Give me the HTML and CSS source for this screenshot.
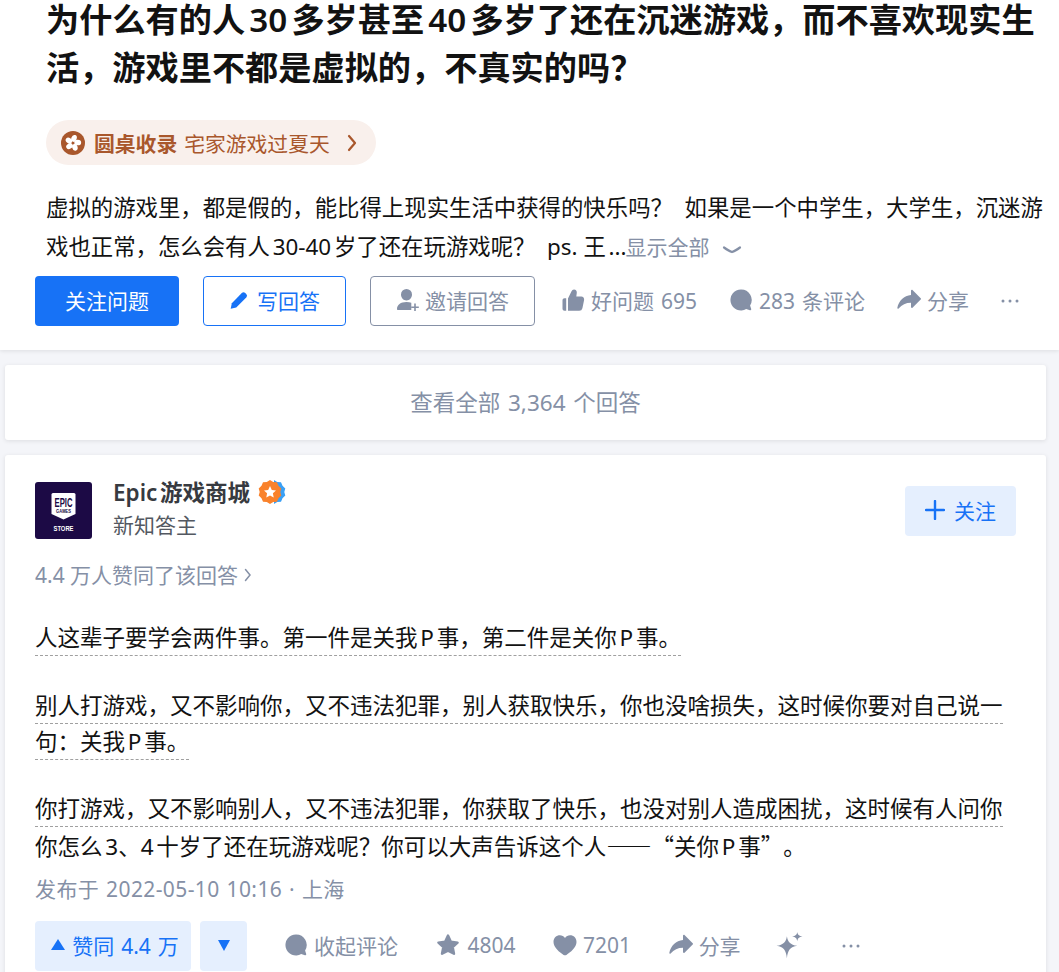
FILE: index.html
```html
<!DOCTYPE html>
<html lang="zh-CN">
<head>
    <meta charset="UTF-8">
    <meta name="viewport" content="width=device-width, initial-scale=1.0">
    <title>为什么有的人 30 多岁甚至 40 多岁了还在沉迷游戏</title>
    <link rel="stylesheet" href="styles.css">
</head>
<body>
    <!-- Question header -->
    <div class="question">
        <h1 class="question-title">为什么有的人30多岁甚至40多岁了还在沉迷游戏，而不喜欢现实生活，游戏里不都是虚拟的，不真实的吗？</h1>
        <div class="roundtable">
            <svg class="roundtable-icon" viewBox="0 0 24 24">
                <circle cx="12" cy="12" r="12" fill="#a9572c"/>
                <g fill="#fff">
                    <ellipse cx="13" cy="7.4" rx="2.7" ry="3.5" transform="rotate(20 13 7.400)"/>
                    <ellipse cx="13" cy="7.4" rx="2.7" ry="3.5" transform="rotate(72 12 12) rotate(20 13 7.400)"/>
                    <ellipse cx="13" cy="7.4" rx="2.7" ry="3.5" transform="rotate(144 12 12) rotate(20 13 7.400)"/>
                    <ellipse cx="13" cy="7.4" rx="2.7" ry="3.5" transform="rotate(216 12 12) rotate(20 13 7.400)"/>
                    <ellipse cx="13" cy="7.4" rx="2.7" ry="3.5" transform="rotate(288 12 12) rotate(20 13 7.400)"/>
                </g>
                <circle cx="12" cy="12" r="1.3" fill="#a9572c"/>
            </svg>
            <b>圆桌收录</b>
            <span class="roundtable-name">宅家游戏过夏天</span>
            <svg class="roundtable-arrow" viewBox="0 0 10 18"><path d="M2 2l6 7-6 7" fill="none" stroke="#a9572c" stroke-width="2.200" stroke-linecap="round" stroke-linejoin="round"/></svg>
        </div>
        <div class="question-detail">虚拟的游戏里，都是假的，能比得上现实生活中获得的快乐吗？&nbsp; 如果是一个中学生，大学生，沉迷游戏也正常，怎么会有人30-40岁了还在玩游戏呢？&nbsp; ps. 王...<span class="show-all">显示全部<svg class="show-all-arrow" viewBox="0 0 20 10"><path d="M2 2.500c3 2.200 5.500 3.800 8 4.500 2.500-.7 5-2.300 8-4.500" fill="none" stroke="#8590a6" stroke-width="2.200" stroke-linecap="round"/></svg></span></div>
        <div class="question-actions">
            <button class="btn btn-primary">关注问题</button>
            <button class="btn btn-outline">
                <svg class="icon-pencil" viewBox="0 0 24 24"><path fill="#1772f6" d="M2 22.500l1.400-6.700L15.300 3.600a3 3 0 0 1 4.200 0l1.200 1.200a3 3 0 0 1 0 4.200L8.700 21z"/></svg>
                写回答
            </button>
            <button class="btn btn-gray">
                <svg class="icon" viewBox="0 0 24 24"><path fill="#8590a6" d="M10.500 1a5.500 5.500 0 0 1 5.500 5.500c0 3.100-2.400 6-5.500 6S5 9.600 5 6.500A5.500 5.500 0 0 1 10.500 1zM1 21c0-4.200 3.600-7 9.500-7 1.900 0 3.500.3 4.800.8V22H2c-.6 0-1-.4-1-1z"/><path fill="#8590a6" d="M18.200 15.500h1.600v3h3v1.600h-3v3h-1.600v-3h-3v-1.600h3z"/></svg>
                邀请回答
            </button>
            <div class="question-meta">
                <span class="meta-item">
                    <svg class="icon" viewBox="0 0 24 24"><path fill="#8590a6" d="M13 1.500c1.900 0 3 1.400 2.800 3.300l-.5 3.700h4.900c2 0 3.300 1.600 2.900 3.600l-1.700 8.100a3.300 3.300 0 0 1-3.200 2.600H7V10.500l3.400-7C11 2.200 11.900 1.500 13 1.500zM1.500 12.300c0-1.100.9-2 2-2h1.700v12.500H3.500c-1.100 0-2-.9-2-2z"/></svg>
                    好问题 695
                </span>
                <span class="meta-item">
                    <svg class="icon" viewBox="0 0 24 24"><use href="#i-comment"/></svg>
                    283 条评论
                </span>
                <span class="meta-item">
                    <svg class="icon" viewBox="0 0 24 24"><use href="#i-share"/></svg>
                    分享
                </span>
                <svg class="icon-more" viewBox="0 0 24 24"><use href="#i-more"/></svg>
            </div>
        </div>
    </div>

    <div class="card view-all">查看全部 3,364 个回答</div>

    <!-- Answer -->
    <div class="card answer">
        <div class="author">
            <svg class="avatar" viewBox="0 0 57 57">
                <rect width="57" height="57" rx="3" fill="#1c0a45"/>
                <path fill="#fff" d="M18 11h21a1.500 1.500 0 0 1 1.500 1.500V32l-12 5.500-12-5.500V12.500A1.500 1.500 0 0 1 18 11z"/>
                <text x="28.500" y="25" class="avatar-epic" text-anchor="middle" textLength="18" lengthAdjust="spacingAndGlyphs">EPIC</text>
                <text x="28.500" y="31" class="avatar-games" text-anchor="middle" textLength="15" lengthAdjust="spacingAndGlyphs">GAMES</text>
                <text x="28.500" y="49" class="avatar-store" text-anchor="middle" textLength="20" lengthAdjust="spacingAndGlyphs">STORE</text>
            </svg>
            <div class="author-info">
                <div class="author-name">Epic游戏商城
                    <svg class="author-badge" viewBox="0 0 28 24">
                        <path fill="#3aa0f5" d="M16 0l3.200 2 3.800.300 1.500 3.500 2.800 2.600-1 3.600 1 3.600-2.800 2.600-1.500 3.500-3.800.300-3.200 2z"/>
                        <path fill="#f9822b" d="M12 0l3.200 2 3.800.300 1.500 3.500 2.800 2.600-1 3.600 1 3.600-2.800 2.600-1.500 3.500-3.800.300L12 24l-3.200-2-3.800-.300-1.500-3.500-2.800-2.600 1-3.600-1-3.600 2.800-2.600L5 2.300l3.800-.300z"/>
                        <path fill="#fff" d="M12 6l1.800 3.900 4.200.5-3.100 2.900.8 4.200-3.700-2.100-3.700 2.100.8-4.200L6 10.400l4.200-.5z"/>
                    </svg>
                </div>
                <div class="author-desc">新知答主</div>
            </div>
            <button class="btn btn-follow">
                <svg class="icon-plus" viewBox="0 0 20 20"><path d="M10 1v18M1 10h18" stroke="#1772f6" stroke-width="2.400" stroke-linecap="round"/></svg>
                关注
            </button>
        </div>
        <div class="voters">4.4 万人赞同了该回答<svg class="voters-arrow" viewBox="0 0 8 14"><path d="M1.500 1.500L6 7l-4.500 5.500" fill="none" stroke="#8590a6" stroke-width="1.500" stroke-linecap="round"/></svg></div>
        <div class="answer-body">
            <p><span class="dashed">人这辈子要学会两件事。第一件是关我P事，第二件是关你P事。</span></p>
            <p><span class="dashed">别人打游戏，又不影响你，又不违法犯罪，别人获取快乐，你也没啥损失，这时候你要对自己说一句：关我P事。</span></p>
            <p><span class="dashed">你打游戏，又不影响别人，又不违法犯罪，你获取了快乐，也没对别人造成困扰，这时候有人问你</span>你怎么3、4十岁了还在玩游戏呢？你可以大声告诉这个人<span class="cjk">——“</span>关你P事<span class="cjk">”</span>。</p>
        </div>
        <div class="answer-time">发布于 2022-05-10 10:16 · 上海</div>
        <div class="answer-actions">
            <button class="btn btn-vote btn-vote-up"><span class="triangle-up"></span>赞同 4.4 万</button>
            <button class="btn btn-vote btn-vote-down"><span class="triangle-down"></span></button>
            <span class="meta-item">
                <svg class="icon" viewBox="0 0 24 24"><use href="#i-comment"/></svg>
                收起评论
            </span>
            <span class="meta-item meta-star">
                <svg class="icon" viewBox="0 0 24 24"><path fill="#8590a6" stroke="#8590a6" stroke-width="2.400" stroke-linejoin="round" d="M12 2.500l2.900 6.200 6.700.9-4.900 4.500 1.300 6.700L12 17.600l-6 3.200 1.300-6.700-4.900-4.500 6.700-.9z"/></svg>
                4804
            </span>
            <span class="meta-item">
                <svg class="icon" viewBox="0 0 24 24"><path fill="#8590a6" d="M.5 9C.5 5 3.400 2.300 6.900 2.300c2.100 0 3.900 1 5.100 2.700 1.200-1.700 3-2.700 5.100-2.700 3.500 0 6.400 2.700 6.400 6.700 0 5.400-6.200 10.400-10.100 12.900-.9.500-1.900.5-2.800 0C6.700 19.400.5 14.400.5 9z"/></svg>
                7201
            </span>
            <span class="meta-item">
                <svg class="icon" viewBox="0 0 24 24"><use href="#i-share"/></svg>
                分享
            </span>
            <svg class="icon-sparkle" viewBox="0 0 26 26"><path fill="#8590a6" d="M10.500 4c.8 5.400 3.200 8.200 10 9.300-6.800 1.100-9.200 4-10 12-.8-8-3.200-10.900-10-12 6.800-1.100 9.200-3.900 10-9.300zM20.500 0c.4 2.700 1.600 3.800 5 4.300-3.400.5-4.600 1.700-5 4.700-.4-3-1.600-4.200-5-4.700 3.400-.5 4.600-1.600 5-4.300z"/></svg>
            <svg class="icon-more" viewBox="0 0 24 24"><use href="#i-more"/></svg>
        </div>
    </div>

    <!-- Shared icons -->
    <svg class="icon-defs">
        <defs>
            <path id="i-comment" fill="#8590a6" d="M12 1.500a10.500 10.500 0 1 0 5.200 19.600l3.700 1.200c.8.200 1.500-.5 1.300-1.300l-1.100-3.500A10.500 10.500 0 0 0 12 1.500z"/>
            <path id="i-share" fill="#8590a6" d="M14 2.700c0-.8.900-1.200 1.500-.7l8.200 8.200c.4.400.4 1 0 1.400L15.500 19.800c-.6.500-1.500.1-1.500-.7v-4.300c-5.200 0-9 1.900-12.400 5.700-.5.600-1.400.2-1.300-.5C1.800 12.500 7 7.600 14 7z"/>
            <g id="i-more" fill="#8590a6"><circle cx="5" cy="12" r="1.500"/><circle cx="12" cy="12" r="1.500"/><circle cx="19" cy="12" r="1.500"/></g>
        </defs>
    </svg>
</body>
</html>
```

FILE: styles.css
```css
html, body {
    height: 972px;
    overflow: hidden;
}

body {
    margin: 0;
    font-family: "Noto Sans", "Noto Sans CJK SC", sans-serif;
    font-size: 22.5px;
    color: #121212;
    background-color: #f4f5f9;
    text-autospace: normal;
    text-spacing-trim: space-all;
}

button {
    font-family: inherit;
}

.cjk {
    font-family: "Noto Sans CJK SC", sans-serif;
}

.icon-defs {
    position: absolute;
    width: 0;
    height: 0;
}

.question {
    display: flow-root;
    height: 350px;
    padding-left: 35px;
    box-sizing: border-box;
    background-color: #ffffff;
    box-shadow: 0 1px 4px rgba(18, 18, 18, 0.1);
}

.question-title {
    margin: -4px 10px 0 11px;
    font-size: 33.200px;
    line-height: 48px;
    font-weight: 600;
}

.roundtable {
    display: inline-flex;
    align-items: center;
    height: 45px;
    width: 330px;
    box-sizing: border-box;
    margin: 28px 0 0 11px;
    padding-left: 15px;
    border-radius: 23px;
    background-color: #f9f0ec;
    color: #a9572c;
    font-size: 20.800px;
}

.roundtable-icon {
    width: 24px;
    height: 24px;
    margin-right: 9px;
}

.roundtable-name {
    margin-left: 7px;
}

.roundtable-arrow {
    width: 10px;
    height: 18px;
    margin-left: 17px;
}

.question-detail {
    margin: 23px 10px 0 11px;
    font-size: 22.400px;
    line-height: 39px;
}

.show-all {
    margin-left: -4px;
    color: #8590a6;
    font-size: 21px;
}

.show-all-arrow {
    width: 20px;
    height: 10px;
    margin-left: 13px;
}

.question-actions {
    display: flex;
    align-items: center;
    margin-top: 9px;
}

.btn {
    display: flex;
    align-items: center;
    justify-content: center;
    height: 50px;
    box-sizing: border-box;
    padding: 0 0 2px;
    border: 1px solid transparent;
    border-radius: 4px;
    font-size: 21px;
    background: none;
}

.btn-primary {
    width: 144px;
    background-color: #1772f6;
    color: #ffffff;
}

.btn-outline {
    width: 143px;
    margin-left: 24px;
    border-color: #1772f6;
    color: #1772f6;
}

.icon-pencil {
    width: 20px;
    height: 20px;
    margin-right: 8px;
}

.btn-gray {
    width: 165px;
    margin-left: 24px;
    border-color: #8590a6;
    color: #8590a6;
}

.btn-gray .icon {
    margin-right: 5px;
}

.icon {
    width: 24px;
    height: 24px;
    flex: none;
}

.question-meta {
    display: flex;
    align-items: center;
    margin-left: 26px;
}

.meta-item {
    display: inline-flex;
    align-items: center;
    gap: 6px;
    padding-bottom: 2px;
    color: #8590a6;
    font-size: 21px;
    word-spacing: 1.500px;
}

.question-meta .meta-item {
    margin-right: 32px;
}

.icon-more {
    width: 24px;
    height: 24px;
}

.question-meta .icon-more {
    margin-left: -3px;
}

.card {
    margin: 15px 13px 0 5px;
    border-radius: 3px;
    background-color: #ffffff;
    box-shadow: 0 1px 4px rgba(18, 18, 18, 0.1);
}

.view-all {
    height: 75px;
    line-height: 75px;
    text-align: center;
    color: #8590a6;
    font-size: 22.500px;
    word-spacing: 2px;
}

.answer {
    padding: 27px 30px 0;
    height: 600px;
}

.author {
    display: flex;
    align-items: flex-start;
}

.avatar {
    width: 57px;
    height: 57px;
    flex: none;
}

.avatar-epic {
    font: 700 12px "Liberation Sans", sans-serif;
    fill: #1c0a45;
}

.avatar-games {
    font: 700 4.500px "Liberation Sans", sans-serif;
    fill: #1c0a45;
}

.avatar-store {
    font: 700 8px "Liberation Sans", sans-serif;
    fill: #ffffff;
}

.author-info {
    margin: -3px 0 0 21px;
    flex: 1;
}

.author-name {
    display: flex;
    align-items: center;
    height: 24px;
    font-size: 22.500px;
    font-weight: 600;
    color: #373a40;
}

.author-badge {
    width: 28px;
    height: 24px;
    margin: 2px 0 0 8px;
}

.author-desc {
    margin-top: 7px;
    font-size: 21px;
    line-height: 30px;
    color: #535861;
}

.btn-follow {
    width: 111px;
    margin: 4px 0 0 0;
    background-color: #e5effe;
    color: #1772f6;
}

.icon-plus {
    width: 20px;
    height: 20px;
    margin-right: 9px;
}

.voters {
    display: flex;
    align-items: center;
    margin-top: 20px;
    font-size: 21px;
    line-height: 30px;
    color: #8590a6;
}

.voters-arrow {
    width: 8px;
    height: 14px;
    margin-left: 6px;
}

.answer-body {
    margin-top: 30px;
    line-height: 36px;
}

.answer-body p {
    margin: 0 0 31.500px;
}

.dashed {
    padding-bottom: 2px;
    border-bottom: 1px dashed #a0a0a0;
}

.answer-time {
    margin-top: -23px;
    font-size: 21px;
    line-height: 30px;
    color: #8590a6;
    letter-spacing: 0.400px;
    word-spacing: 1px;
}

.answer-actions {
    display: flex;
    align-items: center;
    margin-top: 17px;
}

.btn-vote {
    background-color: #e5effe;
    color: #1772f6;
    word-spacing: 1.500px;
}

.btn-vote-up {
    width: 156px;
    padding-left: 4px;
}

.btn-vote-down {
    width: 47px;
    margin-left: 9px;
    margin-right: 37px;
    padding: 0;
}

.triangle-up {
    width: 0;
    height: 0;
    margin-right: 7px;
    border-left: 7px solid transparent;
    border-right: 7px solid transparent;
    border-bottom: 11px solid #1772f6;
}

.triangle-down {
    width: 0;
    height: 0;
    border-left: 6.500px solid transparent;
    border-right: 6.500px solid transparent;
    border-top: 11px solid #1772f6;
}

.answer-actions .meta-item {
    margin-right: 37.500px;
}

.meta-star {
    gap: 8px;
}

.icon-sparkle {
    width: 27px;
    height: 27px;
    margin-left: -2px;
}

.answer-actions .icon-more {
    margin-left: 36px;
}
```
